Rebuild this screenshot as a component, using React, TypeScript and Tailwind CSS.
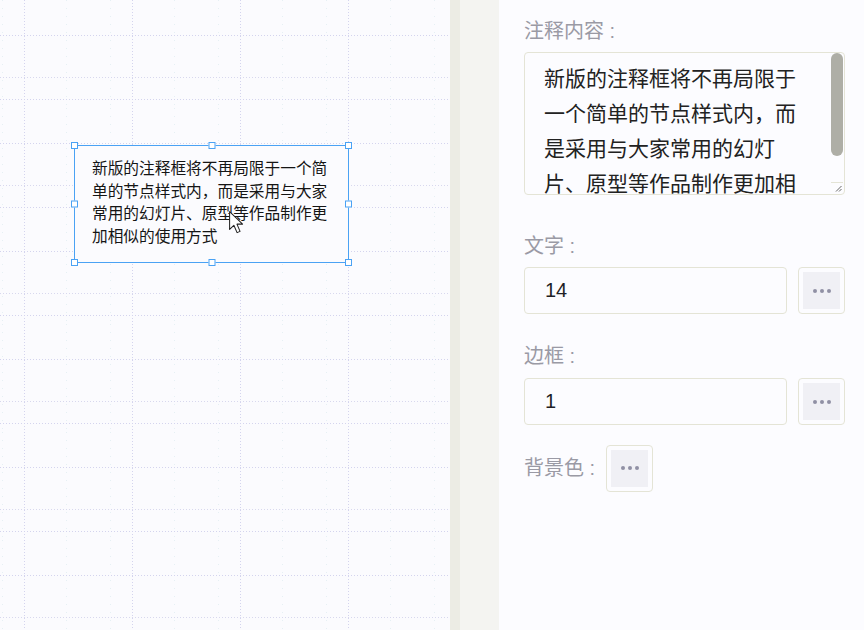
import React from "react";

/* Annotation editor — canvas with a selected note on the left,
   property panel (content / font / border / fill) on the right. */

const NOTE =
  "新版的注释框将不再局限于一个简单的节点样式内，而是采用与大家常用的幻灯片、原型等作品制作更加相似的使用方式";

function GridBg() {
  return (
    <svg className="absolute inset-0" width="450" height="630">
      <defs>
        <pattern id="grid" width="108" height="108" patternUnits="userSpaceOnUse">
          <line x1="24.5" y1="0" x2="24.5" y2="108" stroke="#d4d4ee" strokeDasharray="1 2" />
          <line x1="66.5" y1="0" x2="66.5" y2="108" stroke="#e6f0f4" strokeDasharray="1 7" />
          <line x1="2.5" y1="0" x2="2.5" y2="108" stroke="#e6f0f4" strokeDasharray="1 7" />
          <line x1="0" y1="35.5" x2="108" y2="35.5" stroke="#d4d4ee" strokeDasharray="1 2" />
          <line x1="0" y1="77.5" x2="108" y2="77.5" stroke="#d8d8ee" strokeDasharray="1 2" />
          <line x1="0" y1="99.5" x2="108" y2="99.5" stroke="#d4d4ee" strokeDasharray="1 2" />
        </pattern>
      </defs>
      <rect width="450" height="630" fill="url(#grid)" />
    </svg>
  );
}

function Handle({ pos }: { pos: string }) {
  return <span className={`absolute size-[7px] border border-[#4aa2f4] bg-white ${pos}`} />;
}

function Cursor() {
  return (
    <svg className="absolute left-[227px] top-[211px]" width="19" height="23" viewBox="0 0 13 20">
      <path d="M0.5 0.5 L0.5 16 L4.2 12.4 L7 18.8 L9.6 17.7 L6.9 11.4 L11.8 11.4 Z" fill="#fff" stroke="#222" strokeWidth="0.9" strokeLinejoin="round" />
    </svg>
  );
}

function Dots() {
  return (
    <button className="flex size-[47px] shrink-0 items-center justify-center rounded-[4px] border border-[#e4e4d6] p-[4px]">
      <span className="flex size-full items-center justify-center gap-[3px] bg-[#f0f0f5]">
        <i className="size-[4px] rounded-full bg-[#9090a4]" />
        <i className="size-[4px] rounded-full bg-[#9090a4]" />
        <i className="size-[4px] rounded-full bg-[#9090a4]" />
      </span>
    </button>
  );
}

function Label({ text, className = "" }: { text: string; className?: string }) {
  return <div className={`h-[26px] text-[20px] leading-[26px] text-[#9a9aa5] ${className}`}>{text} :</div>;
}

function Field({ value }: { value: string }) {
  return (
    <div className="flex gap-[11px]">
      <input
        readOnly
        value={value}
        className="h-[47px] w-[263px] rounded-[4px] border border-[#e4e4d6] bg-transparent pl-[20px] text-[20px] text-[#1f1f25] outline-none"
      />
      <Dots />
    </div>
  );
}

function NoteArea() {
  return (
    <div className="relative mt-[8px] h-[143px] w-full overflow-hidden rounded-[4px] border border-[#e4e4d6]">
      <p className="w-[262px] pl-[19px] pt-[8px] text-[21px] leading-[35px] text-[#222] box-content">{NOTE}</p>
      {/* scrollbar thumb */}
      <span className="absolute right-[1px] top-0 h-[103px] w-[12px] rounded-full bg-[#aeaea6]" />
      {/* resize corner */}
      <span className="absolute bottom-[11px] right-[1px] h-px w-[12px] bg-[#e4e4d6]" />
      <svg className="absolute bottom-[2px] right-[2px]" width="7" height="7" viewBox="0 0 7 7">
        <path d="M6.5 1 L1 6.5 M6.5 4 L4 6.5" stroke="#666" strokeWidth="1" />
      </svg>
    </div>
  );
}

export default function App() {
  return (
    <div className="flex h-[630px] w-[864px] overflow-hidden bg-[#fbfbfe] font-['Liberation_Sans','Noto_Sans_CJK_SC',sans-serif]">
      {/* canvas */}
      <div className="relative w-[450px] shrink-0">
        <GridBg />
        <div className="absolute left-[74px] top-[145px] h-[118px] w-[275px] border border-[#4aa2f4] bg-[#fbfbfe] pl-[17px] pr-[17px] pt-[12px]">
          <p className="text-[15.7px] leading-[22.5px] text-[#151515]">{NOTE}</p>
          <Handle pos="-left-[4px] -top-[4px]" />
          <Handle pos="left-1/2 -translate-x-1/2 -top-[4px]" />
          <Handle pos="-right-[4px] -top-[4px]" />
          <Handle pos="-left-[4px] top-1/2 -translate-y-1/2" />
          <Handle pos="-right-[4px] top-1/2 -translate-y-1/2" />
          <Handle pos="-left-[4px] -bottom-[4px]" />
          <Handle pos="left-1/2 -translate-x-1/2 -bottom-[4px]" />
          <Handle pos="-right-[4px] -bottom-[4px]" />
        </div>
        <Cursor />
      </div>

      {/* divider shadow */}
      <div className="w-[10px] shrink-0 bg-[#ececE4]" />
      <div className="w-[39px] shrink-0 bg-[#f4f4f1]" />

      {/* property panel */}
      <div className="flex flex-1 flex-col bg-[#fcfcff] pl-[25px] pr-[19px] pt-[18px]">
        <Label text="注释内容" />
        <NoteArea />
        <Label text="文字" className="mt-[38px]" />
        <div className="mt-[8px]">
          <Field value="14" />
        </div>
        <Label text="边框" className="mt-[29px]" />
        <div className="mt-[9px]">
          <Field value="1" />
        </div>
        <div className="mt-[19px] flex h-[48px] items-center gap-[11px]">
          <Label text="背景色" />
          <Dots />
        </div>
      </div>
    </div>
  );
}
